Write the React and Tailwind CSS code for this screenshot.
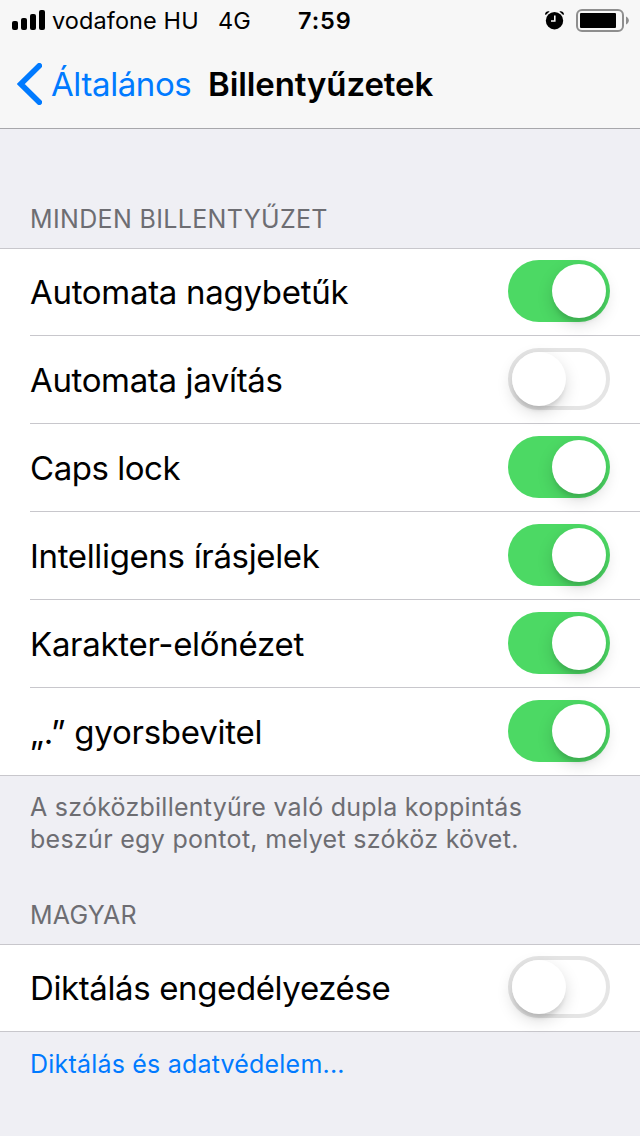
import React, { useState } from "react";

const keyboardSettings = [
  { id: "caps", label: "Automata nagybetűk", on: true, tracking: "tracking-[-0.3px]" },
  { id: "correct", label: "Automata javítás", on: false, tracking: "tracking-[-0.36px]" },
  { id: "lock", label: "Caps lock", on: true, tracking: "tracking-[-0.47px]" },
  { id: "smart", label: "Intelligens írásjelek", on: true, tracking: "tracking-[-0.34px]" },
  { id: "preview", label: "Karakter-előnézet", on: true, tracking: "tracking-[-0.29px]" },
  { id: "period", label: "„.” gyorsbevitel", on: true, tracking: "tracking-[-0.25px]" },
];

const dictationSettings = [
  { id: "dictation", label: "Diktálás engedélyezése", on: false, tracking: "tracking-[-0.38px]" },
];

const Toggle = ({ label, initial }) => {
  const [on, setOn] = useState(initial);

  return (
    <button
      type="button"
      role="switch"
      aria-checked={on}
      aria-label={label}
      onClick={() => setOn(!on)}
      className={
        on
          ? "flex h-[62px] w-[102px] shrink-0 items-center justify-end rounded-full bg-[#4cd964] pr-1"
          : "flex h-[62px] w-[102px] shrink-0 items-center justify-start rounded-full border-4 border-[#e5e5e5] bg-white"
      }
    >
      <span className="h-[54px] w-[54px] rounded-full bg-white shadow-[0_6px_16px_rgba(0,0,0,0.15),0_6px_4px_-2px_rgba(0,0,0,0.1)]" />
    </button>
  );
};

const SettingsGroup = ({ items }) => (
  <div className="bg-white">
    {items.map((item, i) => (
      <div
        key={item.id}
        className={
          (i === 0 ? "border-t border-[#c8c7cc] " : "") +
          (i === items.length - 1 ? "border-b border-[#c8c7cc] " : "") +
          "h-[88px] pl-[30px]"
        }
      >
        <div
          className={
            (i === items.length - 1 ? "" : "border-b border-[#c8c7cc] ") +
            (i === 0 ? "pt-[11px] " : "pt-3 ") +
            "flex h-full items-start justify-between pr-[30px]"
          }
        >
          <span className={"whitespace-nowrap text-[33px] leading-[64px] " + item.tracking}>
            {item.label}
          </span>
          <Toggle label={item.label} initial={item.on} />
        </div>
      </div>
    ))}
  </div>
);

const StatusBar = () => (
  <div className="flex h-10 items-center pl-3 pr-[11px] text-[23.5px] leading-10">
    <svg width="34" height="20" viewBox="0 0 34 20" className="shrink-0">
      <rect x="0" y="11" width="6" height="9" rx="2" />
      <rect x="9" y="8" width="6" height="12" rx="2" />
      <rect x="18" y="4" width="6" height="16" rx="2" />
      <rect x="27" y="0" width="6" height="20" rx="2" />
    </svg>
    <span className="ml-[6px] w-[166px] shrink-0 whitespace-nowrap pt-0.5 tracking-[0.1px]">vodafone HU</span>
    <span className="w-[80px] shrink-0 whitespace-nowrap pt-0.5">4G</span>
    <span className="shrink-0 whitespace-nowrap pt-0.5 font-semibold tracking-[0.9px]">7:59</span>
    <svg width="20" height="20" viewBox="0 0 20 20" className="ml-auto shrink-0">
      <circle cx="10.5" cy="10.7" r="8.7" />
      <path d="M1 4.2C1.2 1.8 3.4 0.8 5.6 1.4L1.8 4.9ZM20 4.2C19.8 1.8 17.6 0.8 15.4 1.4L19.2 4.9Z" />
      <path d="M10.8 5.4v5.6H7" fill="none" stroke="#f7f7f7" strokeWidth="1.6" />
    </svg>
    <svg width="53" height="23" viewBox="0 0 53 23" className="ml-3 shrink-0">
      <rect x="1" y="1" width="46" height="21" rx="5" fill="none" stroke="#8e8e8e" strokeWidth="2" />
      <rect x="4" y="4" width="36" height="15" rx="1" />
      <path d="M50 7.5c3.8 2 3.8 6 0 8z" fill="#8e8e8e" />
    </svg>
  </div>
);

const App = () => {
  return (
    <div className="h-[1136px] w-[640px] overflow-hidden bg-[#efeff4] font-['Inter',sans-serif] text-black">
      <header className="h-[129px] border-b border-[#a7a7ab] bg-[#f7f7f7]">
        <StatusBar />
        <div className="flex h-[88px] items-center pl-[17px]">
          <svg width="25" height="42" viewBox="0 0 25 42" className="shrink-0">
            <path d="M22.3 2.8 3.8 21 22.3 39.2" fill="none" stroke="#007aff" strokeWidth="5.6" strokeLinecap="round" strokeLinejoin="miter" />
          </svg>
          <a href="#" className="ml-[9px] w-[157px] shrink-0 whitespace-nowrap pt-0.5 text-[33px] tracking-[-0.4px] text-[#007aff]">
            Általános
          </a>
          <h1 className="whitespace-nowrap pt-0.5 text-[33px] font-semibold tracking-[-0.1px]">Billentyűzetek</h1>
        </div>
      </header>

      <main>
        <h2 className="flex h-[119px] items-end pl-[30px] pb-[13px] text-[25px] leading-8 tracking-[0.34px] text-[#6d6d72]">
          MINDEN BILLENTYŰZET
        </h2>
        <SettingsGroup items={keyboardSettings} />
        <p className="h-[84px] whitespace-nowrap pl-[30px] pt-[15px] text-[25px] leading-8 text-[#6d6d72]">
          <span className="block tracking-[0.25px]">A szóközbillentyűre való dupla koppintás</span>
          <span className="block tracking-[0.3px]">beszúr egy pontot, melyet szóköz követ.</span>
        </p>
        <h2 className="flex h-[84px] items-end pl-[30px] pb-[13px] text-[25px] leading-8 tracking-[0.2px] text-[#6d6d72]">
          MAGYAR
        </h2>
        <SettingsGroup items={dictationSettings} />
        <a href="#" className="block pl-[30px] pt-4 text-[25px] leading-8 tracking-[0.2px] text-[#007aff]">
          Diktálás és adatvédelem...
        </a>
      </main>
    </div>
  );
};

export default App;
